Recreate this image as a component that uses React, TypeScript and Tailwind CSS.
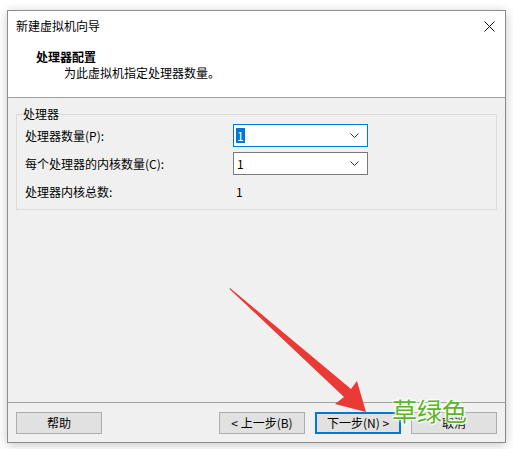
const font = "font-['Microsoft_YaHei','Noto_Sans_CJK_SC',sans-serif]";

function Chevron() {
  return (
    <svg width="9" height="5" viewBox="0 0 9 5" className="shrink-0">
      <path d="M0.5 0.5 L4.5 4.5 L8.5 0.5" fill="none" stroke="#333" strokeWidth="1" />
    </svg>
  );
}

function Combo(props: { value: string; focused?: boolean }) {
  return (
    <div
      className={`flex h-[23px] w-[135px] items-center justify-between bg-white pl-[2px] pr-[8px] ${
        props.focused ? "border border-[#0078d7]" : "border border-[#7a7a7a]"
      }`}
    >
      {props.focused ? (
        <span className="bg-[#0078d7] px-px leading-[15px] text-white">{props.value}</span>
      ) : (
        <span className="px-px leading-[15px]">{props.value}</span>
      )}
      <Chevron />
    </div>
  );
}

function Btn(props: { label: string; primary?: boolean }) {
  return (
    <div
      className={`flex h-[22px] w-[86px] items-center justify-center bg-[#e1e1e1] ${
        props.primary ? "border-2 border-[#0078d7]" : "border border-[#adadad]"
      }`}
    >
      {props.label}
    </div>
  );
}

export default function App() {
  return (
    <div className={`relative h-[449px] w-[513px] overflow-hidden bg-white pl-[7px] pt-[10px] text-[12px] text-black ${font}`}>
      {/* dialog window */}
      <div className="flex h-[433px] w-[499px] flex-col border border-[#8c8c8c] bg-[#f0f0f0] shadow-[0_2px_10px_rgba(0,0,0,0.22)]">
        {/* title + header */}
        <div className="h-[87px] border-b border-[#a0a0a0] bg-white">
          <div className="flex h-[30px] items-center justify-between pl-[8px] pr-[10px]">
            <span>新建虚拟机向导</span>
            <svg width="11" height="11" viewBox="0 0 11 11">
              <path d="M0.5 0.5 L10.5 10.5 M10.5 0.5 L0.5 10.5" stroke="#111" strokeWidth="1" />
            </svg>
          </div>
          <div className="mt-[8px] pl-[28px] font-bold leading-[16px]">处理器配置</div>
          <div className="pl-[56px] leading-[16px]">为此虚拟机指定处理器数量。</div>
        </div>

        {/* body */}
        <div className="flex-1 px-[8px]">
          <fieldset className="mt-[8px] border border-[#dcdcdc] pb-[6px]">
            <legend className="ml-[6px] px-0 leading-[16px]">处理器</legend>
            <div className="mt-[2px] flex flex-col gap-[5px] px-[8px]">
              <div className="flex h-[23px] items-center">
                <span className="w-[208px]">处理器数量(P):</span>
                <Combo value="1" focused />
              </div>
              <div className="flex h-[23px] items-center">
                <span className="w-[208px]">每个处理器的内核数量(C):</span>
                <Combo value="1" />
              </div>
              <div className="flex h-[23px] items-center">
                <span className="w-[211px]">处理器内核总数:</span>
                <span>1</span>
              </div>
            </div>
          </fieldset>
        </div>

        {/* footer buttons */}
        <div className="flex h-[40px] border-t border-[#a0a0a0] px-[8px] pt-[9px]">
          <Btn label="帮助" />
          <div className="ml-auto flex gap-[10px]">
            <Btn label="< 上一步(B)" />
            <Btn label="下一步(N) >" primary />
            <Btn label="取消" />
          </div>
        </div>
      </div>

      {/* red arrow annotation */}
      <svg className="absolute left-0 top-0" width="513" height="449" viewBox="0 0 513 449">
        <polygon
          points="230,288 351,389 357,381 366,412 335,404 344,397 229.5,289"
          fill="#ea3a36"
        />
      </svg>

      {/* watermark label */}
      <div className="absolute left-[392px] top-[394px] text-[25px] leading-[32px] text-[#5cb526] [text-shadow:0_0_2px_#fff,0_0_3px_#fff,0_0_4px_#fff,1px_1px_0_#fff,-1px_-1px_0_#fff]">
        草绿色
      </div>
    </div>
  );
}
